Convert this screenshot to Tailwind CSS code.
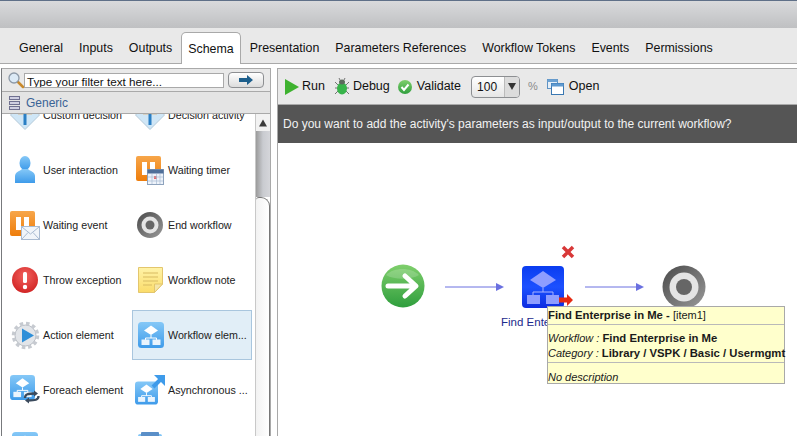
<!DOCTYPE html>
<html>
<head>
<meta charset="utf-8">
<script src="https://cdn.jsdelivr.net/npm/@tailwindcss/browser@4"></script>
</head>
<body class="m-0 overflow-hidden bg-white">
<svg class="absolute w-0 h-0">
  <defs>
    <linearGradient id="gb" x1="0" y1="0" x2="0" y2="1"><stop offset="0" stop-color="#85c8f7"/><stop offset="1" stop-color="#3e9bea"/></linearGradient>
    <linearGradient id="go" x1="0" y1="0" x2="0" y2="1"><stop offset="0" stop-color="#f7a64a"/><stop offset="1" stop-color="#ee7d0b"/></linearGradient>
    <linearGradient id="gn" x1="0" y1="0" x2="0" y2="1"><stop offset="0" stop-color="#7fcf6c"/><stop offset="1" stop-color="#2f9e3d"/></linearGradient>
    <linearGradient id="gd" x1="0" y1="0" x2="1" y2="1"><stop offset="0" stop-color="#4a4a4a"/><stop offset="1" stop-color="#9a9a9a"/></linearGradient>
    <linearGradient id="gy" x1="0" y1="0" x2="0" y2="1"><stop offset="0" stop-color="#fff3a8"/><stop offset="1" stop-color="#fbdc6a"/></linearGradient>
    <radialGradient id="gr" cx=".5" cy=".35" r=".7"><stop offset="0" stop-color="#f2625e"/><stop offset="1" stop-color="#cf2020"/></radialGradient>
    <symbol id="wf" viewBox="0 0 26 26">
      <rect width="26" height="26" rx="3.500" fill="url(#gb)"/>
      <path d="M13 3.500 20 8.500 13 13 6 8.500Z" fill="#fff"/>
      <path d="M13 13V16M7.500 18.500V16H18.500V18.500" stroke="#fff" fill="none" stroke-width="1"/>
      <rect x="3.500" y="17.500" width="8" height="5.500" fill="#eaf4fd"/>
      <rect x="14.500" y="17.500" width="8" height="5.500" fill="#eaf4fd"/>
    </symbol>
    <symbol id="dec" viewBox="0 0 30 30">
      <path d="M15 .5 29.500 15 15 29.500 .5 15Z" fill="#cfe6f6" stroke="#b4c9d8"/>
      <path d="M8 13H22" stroke="#f0962a" stroke-width="2.500"/>
      <path d="M15 13V25" stroke="#2a7fc4" stroke-width="3"/>
    </symbol>
  </defs>
</svg>

<div class="w-[797px] h-[436px] flex flex-col overflow-hidden font-['Liberation_Sans',Arial,sans-serif] text-[12.500px] text-[#111]">
  <div class="h-[28px] shrink-0 border-t border-[#5f7088] bg-gradient-to-b from-[#d9dadc] to-[#bfc0c2]"></div>

  <div class="h-[36px] shrink-0 bg-[#e9e9e9] border-b border-[#a9a9a9] flex items-start gap-[16px] pl-[19px] text-[12.400px]">
    <span class="mt-[11px]">General</span>
    <span class="mt-[11px]">Inputs</span>
    <span class="mt-[11px]">Outputs</span>
    <span class="-mx-[7px] mt-[4px] h-[32px] px-[6px] pt-[7px] bg-white border border-b-0 border-[#a9a9a9] rounded-t-[5px]">Schema</span>
    <span class="mt-[11px]">Presentation</span>
    <span class="mt-[11px]">Parameters References</span>
    <span class="mt-[11px]">Workflow Tokens</span>
    <span class="mt-[11px]">Events</span>
    <span class="mt-[11px]">Permissions</span>
  </div>

  <div class="flex-1 min-h-0 flex pt-[4px] pl-[1px] bg-white">
    <!-- Left palette -->
    <div class="w-[270px] shrink-0 flex flex-col border-t border-l border-r border-[#a9a9a9] border-l-[#77797c]">
      <div class="h-[23px] shrink-0 bg-[#e9e9e9] border-b border-[#a9a9a9] flex items-center pl-[5px]">
        <svg width="17" height="18" viewBox="0 0 17 18" class="shrink-0">
          <path d="M10 10 16 16" stroke="#c98a2c" stroke-width="2.500" stroke-linecap="round"/>
          <circle cx="7" cy="7" r="5" fill="#dceaf6" stroke="#8d9aa8" stroke-width="1.300"/>
        </svg>
        <div class="w-[200px] h-[15px] bg-white border border-[#a9a9a9] overflow-hidden text-[11.700px] leading-[16px] pl-[2px] text-[#111]">Type your filter text here...</div>
        <div class="ml-[4px] w-[36px] h-[16px] rounded-[4px] border border-[#8d8f92] bg-gradient-to-b from-white to-[#dcdcdc] flex items-center justify-center">
          <svg width="14" height="10" viewBox="0 0 14 10"><path d="M0 3H8V0L14 5 8 10V7H0Z" fill="#1d5f8c"/></svg>
        </div>
      </div>
      <div class="h-[22px] shrink-0 bg-[#e4e4e4] border-b border-[#a9a9a9] flex items-center pl-[7px] text-[#3a6396] text-[12px]">
        <svg width="11" height="14" viewBox="0 0 11 14" class="shrink-0"><g fill="#cfcfe2" stroke="#6f7090"><rect x=".5" y=".5" width="10" height="3"/><rect x=".5" y="5.500" width="10" height="3"/><rect x=".5" y="10.500" width="10" height="3"/></g></svg>
        <span class="ml-[6px]">Generic</span>
      </div>
      <div class="flex-1 min-h-0 flex overflow-hidden">
        <div class="w-[253px] overflow-hidden">
          <div class="-mt-[24px] pl-[5px] grid grid-cols-[120px_120px] gap-[5px] auto-rows-[50px] text-[10.700px] text-[#222]">
            <div class="flex items-center"><div class="w-[36px] flex justify-center"><svg width="30" height="30"><use href="#dec"/></svg></div><span>Custom decision</span></div>
            <div class="flex items-center"><div class="w-[36px] flex justify-center"><svg width="30" height="30"><use href="#dec"/></svg></div><span>Decision activity</span></div>
            <!-- user -->
            <div class="flex items-center"><div class="w-[36px] flex justify-center"><svg width="22" height="28" viewBox="0 0 22 28"><ellipse cx="11" cy="7" rx="5.500" ry="7" fill="url(#gb)"/><path d="M1 27V20C1 16 6 15 8 13H14C16 15 21 16 21 20V27Z" fill="url(#gb)"/></svg></div><span>User interaction</span></div>
            <!-- waiting timer -->
            <div class="flex items-center"><div class="w-[36px] flex justify-center"><svg width="28" height="29" viewBox="0 0 28 29"><rect width="25" height="25" rx="2" fill="url(#go)"/><rect x="6" y="6" width="5" height="13" fill="#fff"/><rect x="14" y="6" width="5" height="13" fill="#fff"/><rect x="11.500" y="13.500" width="16" height="15" fill="#eef3fa" stroke="#8ea3bd"/><rect x="11.500" y="13.500" width="16" height="4" fill="#4f6f99"/><rect x="18" y="20" width="3" height="3" fill="#e86a6a"/><path d="M12 21H27M12 25H27M16 18V28M20.500 18V28M24 18V28" stroke="#a9bbd2" stroke-width=".7"/></svg></div><span>Waiting timer</span></div>
            <!-- waiting event -->
            <div class="flex items-center"><div class="w-[36px] flex justify-center"><svg width="30" height="29" viewBox="0 0 30 29"><rect width="25" height="25" rx="2" fill="url(#go)"/><rect x="6" y="6" width="5" height="13" fill="#fff"/><rect x="14" y="6" width="5" height="13" fill="#fff"/><rect x="11.500" y="15.500" width="18" height="13" fill="#f1f5fa" stroke="#a9bbd2"/><path d="M12 16 20.500 23 29 16M12 28 18 21.500M29 28 23 21.500" stroke="#a9bbd2" fill="none"/></svg></div><span>Waiting event</span></div>
            <!-- end workflow -->
            <div class="flex items-center"><div class="w-[36px] flex justify-center"><svg width="26" height="26" viewBox="0 0 26 26"><circle cx="13" cy="13" r="13" fill="url(#gd)"/><circle cx="13" cy="13" r="8.500" fill="#e4e4e4"/><circle cx="13" cy="13" r="4.500" fill="#666"/></svg></div><span>End workflow</span></div>
            <!-- throw -->
            <div class="flex items-center"><div class="w-[36px] flex justify-center"><svg width="26" height="26" viewBox="0 0 26 26"><circle cx="13" cy="13" r="13" fill="url(#gr)"/><rect x="11" y="5" width="4" height="11" rx="1.500" fill="#fff"/><circle cx="13" cy="20" r="2.200" fill="#fff"/></svg></div><span>Throw exception</span></div>
            <!-- note -->
            <div class="flex items-center"><div class="w-[36px] flex justify-center"><svg width="25" height="26" viewBox="0 0 25 26"><path d="M.5 .5H24.500V17L16.500 25.500H.5Z" fill="url(#gy)" stroke="#e3c66d"/><path d="M5 6H20M5 10H20M5 14H20M5 18H14" stroke="#d8bb62"/><path d="M16.500 25.500V17H24.500Z" fill="#f5e6a8" stroke="#e3c66d"/></svg></div><span>Workflow note</span></div>
            <!-- action -->
            <div class="flex items-center"><div class="w-[36px] flex justify-center"><svg width="29" height="29" viewBox="0 0 29 29"><circle cx="14.500" cy="14.500" r="10.500" fill="#e2e5e9" stroke="#b8bdc4" stroke-width="1"/><circle cx="14.500" cy="14.500" r="12" fill="none" stroke="#c6cad0" stroke-width="3.500" stroke-dasharray="3.500 2.800"/><path d="M11 7.500 23 14.500 11 21.500Z" fill="#2f8fd8"/></svg></div><span>Action element</span></div>
            <!-- workflow selected -->
            <div class="flex items-center bg-[#e1eef7] border border-[#a9c6de]"><div class="w-[35px] flex justify-center"><svg width="26" height="26"><use href="#wf"/></svg></div><span>Workflow elem...</span></div>
            <!-- foreach -->
            <div class="flex items-center"><div class="w-[36px] flex justify-center"><svg width="30" height="30" viewBox="0 0 30 30"><use href="#wf" width="25" height="25"/><path d="M15 23C15 19 18 18.500 25 18.500M28.500 21C28.500 25 25 25.500 18 25.500" stroke="#3b4a5c" stroke-width="2.300" fill="none"/><path d="M24 15.500 28 18.500 24 21.500ZM19 22.500 15 25.500 19 28.500Z" fill="#3b4a5c"/></svg></div><span>Foreach element</span></div>
            <!-- async -->
            <div class="flex items-center"><div class="w-[36px] flex justify-center"><svg width="30" height="30" viewBox="0 0 30 30"><use href="#wf" y="6" width="23" height="24"/><path d="M18 12 26 4" stroke="#3e9bea" stroke-width="4"/><path d="M19 0H30V11Z" fill="#3e9bea"/></svg></div><span>Asynchronous ...</span></div>
            <!-- clipped last row -->
            <div class="flex items-center"><div class="w-[36px] flex justify-center"><svg width="26" height="26"><use href="#wf"/></svg></div></div>
            <div class="flex items-center"><div class="w-[36px] flex justify-center"><svg width="24" height="26" viewBox="0 0 24 26"><rect y="2" width="24" height="24" rx="2" fill="url(#gb)"/><rect x="3" width="18" height="5" rx="1" fill="#5a8fc8"/></svg></div></div>
          </div>
        </div>
        <!-- Scrollbar -->
        <div class="w-[15px] shrink-0 flex flex-col border-l border-[#c8c8c8]">
          <div class="h-[17px] shrink-0 bg-[#f2f2f2] flex items-center justify-center text-[#444]"><svg width="8" height="8" viewBox="0 0 8 8"><path d="M4 .5 8 7.500H0Z" fill="#3c3c3c"/></svg></div>
          <div class="h-[66px] shrink-0 bg-gradient-to-r from-[#9b9b9b] via-[#c9cbd0] to-[#d5d6da]"></div>
          <div class="flex-1 bg-gradient-to-r from-[#f2f2f2] to-white border-t border-r border-[#777] rounded-tr-[9px] rounded-tl-[3px]"></div>
        </div>
      </div>
    </div>

    <div class="w-[6px] shrink-0"></div>

    <!-- Right workspace -->
    <div class="flex-1 min-w-0 flex flex-col border-t border-l border-[#a9a9a9]">
      <div class="h-[35px] shrink-0 bg-[#e9e9e9] flex items-center">
        <svg width="14" height="16" viewBox="0 0 14 16" class="ml-[7px] mr-[3px]"><path d="M0 0 14 8 0 16Z" fill="#3eb22f"/></svg>
        <span>Run</span>
        <svg width="14" height="17" viewBox="0 0 14 17" class="ml-[10px] mr-[4px]"><g stroke="#666" stroke-width=".9"><path d="M3 7 0 4M3 10H0M3 13 0 16M11 7 14 4M11 10H14M11 13 14 16M5 2 4 0M9 2 10 0"/></g><ellipse cx="7" cy="10.500" rx="5" ry="6" fill="#37b44a"/><ellipse cx="7" cy="4" rx="3" ry="2.500" fill="#5c6b5c"/></svg>
        <span>Debug</span>
        <svg width="14" height="14" viewBox="0 0 14 14" class="ml-[8px] mr-[5px]"><circle cx="7" cy="7" r="7" fill="url(#gn)"/><path d="M3.500 7 6 10 10.500 4.500" stroke="#fff" stroke-width="2" fill="none"/></svg>
        <span>Validate</span>
        <div class="ml-[10px] w-[49px] h-[22px] rounded-[4px] border border-[#8d8f92] bg-gradient-to-b from-white to-[#e6e6e6] flex items-center overflow-hidden">
          <span class="w-[32px] pl-[5px] text-[12px]">100</span>
          <div class="flex-1 h-full border-l border-[#bbb] bg-[#dcdcdc] flex items-center justify-center"><svg width="8" height="7" viewBox="0 0 8 7"><path d="M0 0H8L4 7Z" fill="#333"/></svg></div>
        </div>
        <span class="ml-[8px] text-[#8a8a8a] text-[11px]">%</span>
        <svg width="17" height="16" viewBox="0 0 17 16" class="ml-[9px] mr-[5px]"><rect x=".5" y=".5" width="10" height="9" fill="#e6eff8" stroke="#5f93c4"/><rect x=".5" y=".5" width="10" height="2.500" fill="#6ea3d3"/><rect x="4.500" y="4.500" width="12" height="11" fill="#fff" stroke="#3a78b2"/><rect x="4.500" y="4.500" width="12" height="3" fill="#5f9ad0"/></svg>
        <span>Open</span>
      </div>
      <div class="h-[39px] shrink-0 bg-[#555555] border-t border-[#a9a9a9] flex items-center pl-[5px] text-[#f2f2f2] text-[12px]">Do you want to add the activity's parameters as input/output to the current workflow?</div>

      <!-- Canvas -->
      <div class="relative flex-1 bg-white">
        <svg width="44" height="44" viewBox="0 0 44 44" class="absolute left-[103px] top-[121px]"><circle cx="22" cy="22" r="21.500" fill="url(#gn)"/><path d="M5 11C13 3 30 3 38 11 30 16 13 16 5 11Z" fill="#fff" opacity=".18"/><path d="M7 22H34M24 12 35 22 24 32" stroke="#fff" stroke-width="5" fill="none" stroke-linecap="round" stroke-linejoin="round"/></svg>

        <svg width="60" height="10" viewBox="0 0 60 10" class="absolute left-[167px] top-[139px]"><path d="M0 5H52" stroke="#6a70e0"/><path d="M51 1 59 5 51 9Z" fill="#6a70e0"/></svg>

        <div class="absolute left-[244px] top-[123px] w-[42px] h-[42px] rounded-[4px] bg-gradient-to-b from-[#0a3cf0] via-[#1c50ff] to-[#0f2be0]"></div>
        <svg width="42" height="42" viewBox="0 0 42 42" class="absolute left-[244px] top-[123px]"><path d="M21 5 34 14 21 22 8 14Z" fill="#8f9dff"/><path d="M21 22V26M11 30V26H31V30" stroke="#a8b2ff" fill="none"/><rect x="5" y="29" width="13" height="9" fill="#8f9dff"/><rect x="24" y="29" width="13" height="9" fill="#8f9dff"/></svg>

        <svg width="14" height="14" viewBox="0 0 14 14" class="absolute left-[283px] top-[102px]"><path d="M2 2 12 12M12 2 2 12" stroke="#d83838" stroke-width="3.500"/></svg>
        <svg width="14" height="12" viewBox="0 0 14 12" class="absolute left-[281px] top-[151px]"><path d="M0 3.500H8V0L14 6 8 12V8.500H0Z" fill="#e52a12"/></svg>

        <div class="absolute left-[223px] top-[172px] text-[#1c2a8c] text-[11.500px] leading-[14px]">Find Enterprise in Me</div>

        <svg width="60" height="10" viewBox="0 0 60 10" class="absolute left-[307px] top-[139px]"><path d="M0 5H52" stroke="#6a70e0"/><path d="M51 1 59 5 51 9Z" fill="#6a70e0"/></svg>

        <svg width="44" height="44" viewBox="0 0 44 44" class="absolute left-[384px] top-[122px]"><circle cx="22" cy="22" r="21.500" fill="url(#gd)"/><circle cx="22" cy="22" r="14.500" fill="#e4e4e4"/><circle cx="22" cy="22" r="8" fill="#666"/></svg>

        <!-- Tooltip -->
        <div class="absolute left-[269px] top-[163px] w-[238px] h-[78px] bg-[#ffffcc] border border-[#a9a9a9] text-[11px] leading-[15px] text-[#1a1a1a] flex flex-col">
          <div class="h-[18px] shrink-0 border-b border-[#b9b9b9] flex items-center whitespace-nowrap"><b class="font-semibold text-[11.300px]">Find Enterprise in Me -&nbsp;</b><span>[item1]</span></div>
          <div class="h-[38px] shrink-0 border-b border-[#b9b9b9] pt-[6px] whitespace-nowrap">
            <div><i>Workflow :</i> <b class="font-semibold text-[11.300px]">Find Enterprise in Me</b></div>
            <div><i>Category :</i> <b class="font-semibold text-[11.300px]">Library / VSPK / Basic / Usermgmt</b></div>
          </div>
          <div class="flex-1 flex items-center pt-[7px]"><i>No description</i></div>
        </div>
      </div>
    </div>
  </div>
</div>
</body>
</html>
